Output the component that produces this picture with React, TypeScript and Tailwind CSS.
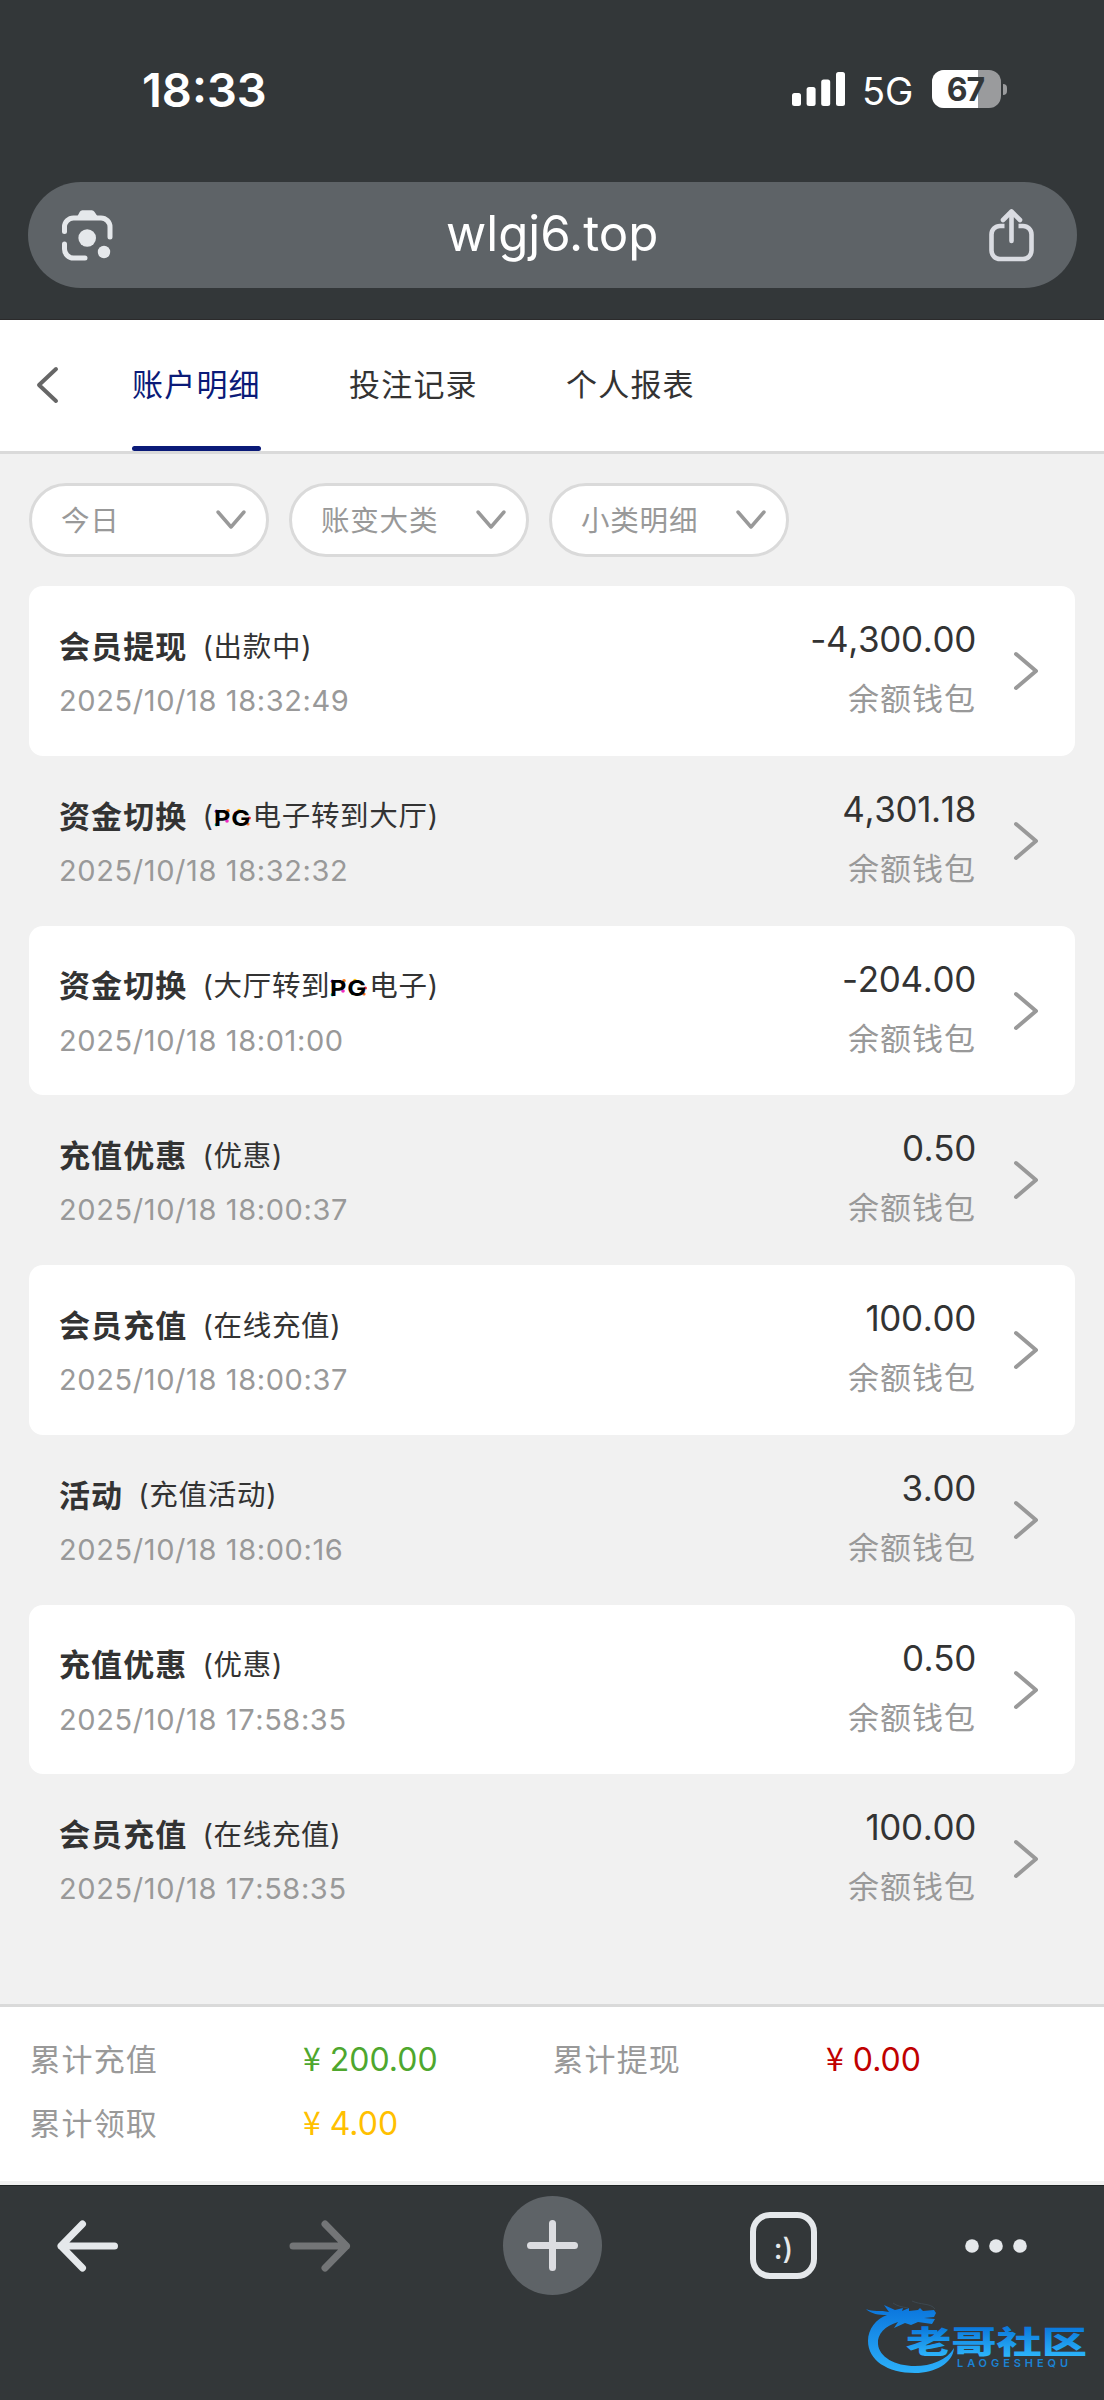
import type { ReactNode } from "react";

type RecordItem = {
  title: string;
  note: ReactNode;
  time: string;
  amount: string;
};

function PgMark() {
  return (
    <svg width="38" height="28" viewBox="0 0 38 28" className="mr-px inline-block overflow-visible align-[-6px]">
      <circle cx="2.4" cy="7.2" r="1.8" fill="#7a2bff" />
      <circle cx="14" cy="6.8" r="1.8" fill="#ff7a1a" />
      <circle cx="2.4" cy="20.8" r="1.8" fill="#10c8f0" />
      <circle cx="13" cy="17" r="1.8" fill="#f02bc0" />
      <circle cx="25" cy="6.6" r="1.8" fill="#ffc81a" />
      <circle cx="21.4" cy="9" r="1.6" fill="#f02b9a" />
      <circle cx="35.4" cy="14" r="1.6" fill="#ff2b3a" />
      <circle cx="22.4" cy="19.4" r="1.6" fill="#10a8f0" />
      <circle cx="34" cy="20" r="1.6" fill="#ff6a1a" />
      <text x="0" y="21.5" textLength="37" lengthAdjust="spacingAndGlyphs" className="font-['Inter',sans-serif] text-[22px] font-bold" fill="#000">
        PG
      </text>
    </svg>
  );
}

const tabs = ["账户明细", "投注记录", "个人报表"];
const filters = ["今日", "账变大类", "小类明细"];

const records: RecordItem[] = [
  { title: "会员提现", note: "出款中", time: "2025/10/18 18:32:49", amount: "-4,300.00" },
  { title: "资金切换", note: <><PgMark />电子转到大厅</>, time: "2025/10/18 18:32:32", amount: "4,301.18" },
  { title: "资金切换", note: <>大厅转到<PgMark />电子</>, time: "2025/10/18 18:01:00", amount: "-204.00" },
  { title: "充值优惠", note: "优惠", time: "2025/10/18 18:00:37", amount: "0.50" },
  { title: "会员充值", note: "在线充值", time: "2025/10/18 18:00:37", amount: "100.00" },
  { title: "活动", note: "充值活动", time: "2025/10/18 18:00:16", amount: "3.00" },
  { title: "充值优惠", note: "优惠", time: "2025/10/18 17:58:35", amount: "0.50" },
  { title: "会员充值", note: "在线充值", time: "2025/10/18 17:58:35", amount: "100.00" },
];

const totals = [
  { label: "累计充值", value: "200.00", color: "text-[#4ea72e]" },
  { label: "累计提现", value: "0.00", color: "text-[#c00000]" },
  { label: "累计领取", value: "4.00", color: "text-[#ffc000]" },
];

function StatusBar() {
  return (
    <div className="flex h-[182px] items-start justify-between pl-[142px] pr-[97px] pt-[60px] text-white">
      <span className="pt-px text-[47px] font-semibold leading-[58px]">18:33</span>
      <div className="flex h-[58px] items-center">
        <svg width="54" height="36" viewBox="0 0 54 36" fill="#fff">
          <rect x="0" y="22" width="9" height="13" rx="2.5" />
          <rect x="14.6" y="16" width="9" height="19" rx="2.5" />
          <rect x="29.2" y="8.4" width="9" height="26.6" rx="2.5" />
          <rect x="44" y="1" width="9" height="34" rx="2.5" />
        </svg>
        <span className="ml-[16px] w-[52px] pt-[3px] text-[38px] leading-[58px]">5G</span>
        <div className="relative ml-[18px] h-[38px] w-[69px] overflow-hidden rounded-[12px] bg-[#9a9b9d]">
          <div className="h-full w-[46px] bg-white" />
          <span className="absolute inset-0 pr-[2px] text-center text-[32px] font-bold leading-[39px] tracking-[-1px] text-[#333739]">67</span>
        </div>
        <div className="ml-[2px] h-[11px] w-[4px] rounded-r-full bg-[#9a9b9d]" />
      </div>
    </div>
  );
}

function AddressBar() {
  return (
    <div className="mx-[27.5px] flex h-[106px] items-center justify-between rounded-full bg-[#5e6367] pl-[34.5px] pr-[42px]">
      <svg width="51" height="52" viewBox="0 0 51 52" fill="none" stroke="#e5e8eb" strokeWidth="5" strokeLinecap="round">
        <path d="M2.5 22.5V18a9 9 0 0 1 9-9h27.5a9 9 0 0 1 9 9v10" />
        <path d="M2.5 35v5a9 9 0 0 0 9 9H23" />
        <path d="M15 8l2.8-5.2a3 3 0 0 1 2.6-1.6h9.4a3 3 0 0 1 2.6 1.6L36 8z" fill="#e5e8eb" stroke="none" />
        <circle cx="25.2" cy="29" r="8.8" fill="#e5e8eb" stroke="none" />
        <circle cx="42" cy="43" r="6.2" fill="#e5e8eb" stroke="none" />
      </svg>
      <span className="pb-[4px] pl-[2px] text-[49.2px] leading-[60px] text-white">wlgj6.top</span>
      <svg width="45" height="54" viewBox="0 0 45 54" fill="none" stroke="#dadce2" strokeWidth="4.6" strokeLinecap="round" strokeLinejoin="round">
        <path d="M15.5 18H11a8.5 8.5 0 0 0-8.5 8.5v16A8.5 8.5 0 0 0 11 51h23a8.5 8.5 0 0 0 8.5-8.5v-16A8.5 8.5 0 0 0 34 18h-4.5" strokeLinecap="butt" />
        <path d="M22.5 33V3.5M14 12l8.5-8.5L31 12" />
      </svg>
    </div>
  );
}

function TabNav() {
  return (
    <nav className="flex h-[134px] items-stretch border-b-[3px] border-[#dadada] bg-white">
      <div className="flex w-[132px] items-center pl-[34.5px] pb-[1px]">
        <svg width="24" height="40" viewBox="0 0 24 40" fill="none" stroke="#666" strokeWidth="4" strokeLinecap="round" strokeLinejoin="round">
          <path d="M21 4L4 20l17 16" />
        </svg>
      </div>
      <div className="flex gap-[88px]">
        {tabs.map((tab, i) => (
          <div
            key={tab}
            className={
              i === 0
                ? "flex w-[129px] flex-col justify-between text-[#0a1a78]"
                : "flex w-[129px] flex-col justify-between text-[#333]"
            }
          >
            <span className="whitespace-nowrap pt-[42px] text-[31px] leading-[46px] tracking-[1.2px]">{tab}</span>
            {i === 0 && <div className="h-[5px] rounded-full bg-[#0a1a78]" />}
          </div>
        ))}
      </div>
    </nav>
  );
}

function Filters() {
  return (
    <div className="flex gap-[20px] px-[29px] pt-[29px]">
      {filters.map((name) => (
        <div
          key={name}
          className="flex h-[74px] w-[240px] items-center justify-between rounded-full border-[3px] border-[#dadada] bg-white pl-[29px] pr-[19px] text-[28.5px] leading-[40px] text-[#999]"
        >
          <span className="pt-[2px] tracking-[0.8px]">{name}</span>
          <svg width="32" height="22" viewBox="0 0 32 22" fill="none" stroke="#999" strokeWidth="3.5" strokeLinecap="round" strokeLinejoin="round">
            <path d="M3 3l13 15L29 3" />
          </svg>
        </div>
      ))}
    </div>
  );
}

function RecordRow({ item, filled }: { item: RecordItem; filled: boolean }) {
  return (
    <li
      className={
        filled
          ? "flex h-[169.75px] rounded-[14px] bg-white pl-[30px] pr-[35px]"
          : "flex h-[169.75px] pl-[30px] pr-[35px]"
      }
    >
      <div className="flex-1 pt-[38px]">
        <div className="flex h-[46px] items-center whitespace-nowrap text-[#333]">
          <span className="text-[31px] font-bold tracking-[1.1px]">{item.title}</span>
          <span className="ml-[15px] text-[28.5px] tracking-[0.7px]">({item.note})</span>
        </div>
        <p className="mt-[11px] text-[29px] leading-[40px] tracking-[0.6px] text-[#999] [font-kerning:none]">{item.time}</p>
      </div>
      <div className="flex flex-col items-end pt-[31px]">
        <span className="text-[35px] leading-[44px] tracking-[-0.35px] text-[#333] [font-kerning:none]">{item.amount}</span>
        <span className="mt-[15px] text-[31px] leading-[46px] tracking-[1px] text-[#999]">余额钱包</span>
      </div>
      <svg width="28" height="42" viewBox="0 0 28 42" className="ml-[36px] mt-[64px]" fill="none" stroke="#999" strokeWidth="4" strokeLinecap="round" strokeLinejoin="round">
        <path d="M4 4l20 17L4 38" />
      </svg>
    </li>
  );
}

function Totals() {
  return (
    <div className="grid h-[177px] grid-cols-[523px_523px] content-start gap-y-[18px] border-t-[3px] border-[#dadada] bg-white pl-[29.5px] pt-[30px]">
      {totals.map((t) => (
        <div key={t.label} className="flex h-[46px] items-center">
          <span className="w-[273.5px] text-[31px] tracking-[1.1px] text-[#999]">{t.label}</span>
          <span className={`pb-[3px] text-[32px] ${t.color}`}>
            <span className="mr-[9px] font-['Noto_Sans_CJK_SC',sans-serif]">¥</span>
            {t.value}
          </span>
        </div>
      ))}
    </div>
  );
}

function Watermark() {
  return (
    <svg width="230" height="90" viewBox="0 0 230 90" className="absolute right-[9px] bottom-[10px]">
      <defs>
        <linearGradient id="wm" x1="0" y1="0" x2="0" y2="1">
          <stop offset="0" stopColor="#0a74dc" />
          <stop offset="1" stopColor="#2cb0fa" />
        </linearGradient>
        <linearGradient id="wmText" gradientUnits="userSpaceOnUse" x1="0" y1="27" x2="0" y2="56">
          <stop offset="0" stopColor="#0a78dc" />
          <stop offset="1" stopColor="#2cb4fa" />
        </linearGradient>
      </defs>
      <path
        fill="url(#wm)"
        d="M1 9C8 12 15 10 24 12L19 5L30 10L38 8L37 11L44 8L44 11L53 10L55 8L58 11L69 10L71 13L69 17L59 18L70 19L67 24L53 22L46 25L40 23L29 28L33 22C20 26 12 34 13 44C14 57 30 66 50 66C66 66 82 60 89 48C88 63 70 73 50 73C22 73 3 60 3 41C3 29 11 19 22 15C14 15 6 14 1 9Z"
      />
      <path d="M28 3c4 3 9 4 15 5M47 1c8 4 19 2 23 8" fill="none" stroke="#3c4850" strokeWidth="1" />
      <text x="41" y="53" textLength="181" lengthAdjust="spacingAndGlyphs" className="font-['Noto_Sans_CJK_SC',sans-serif] text-[31px] font-black" fill="url(#wmText)">
        老哥社区
      </text>
      <text x="92" y="67.3" textLength="111" className="text-[11px] font-semibold" fill="#1b83d4">
        LAOGESHEQU
      </text>
    </svg>
  );
}

function BottomBar() {
  return (
    <footer className="relative flex h-[215px] items-start border-t border-[#1f2424] bg-[#333739]">
      <div className="flex h-[120px] w-full items-center">
        <svg width="62" height="54" viewBox="0 0 62 54" className="ml-[56.5px]" fill="none" stroke="#e5e8eb" strokeWidth="7" strokeLinecap="round" strokeLinejoin="round">
          <path d="M57.5 27H4M25.5 5L4 27l21.5 22" />
        </svg>
        <svg width="62" height="54" viewBox="0 0 62 54" className="ml-[170.5px]" fill="none" stroke="#737577" strokeWidth="7" strokeLinecap="round" strokeLinejoin="round">
          <path d="M4 27h53.5M36 5l21.5 22L36 49" />
        </svg>
        <div className="mb-[2px] ml-[151.5px] flex h-[99px] w-[99px] items-center justify-center rounded-full bg-[#5e6367]">
          <svg width="51" height="51" viewBox="0 0 51 51" fill="none" stroke="#dcdde1" strokeWidth="7" strokeLinecap="round">
            <path d="M25.5 3.5v44M3.5 25.5h44" />
          </svg>
        </div>
        <div className="mb-px ml-[148.5px] flex h-[67px] w-[67px] items-center justify-center rounded-[20px] border-[6px] border-[#e5e8eb] pt-[6px] text-[29px] font-medium leading-none text-[#e5e8eb] [font-feature-settings:'calt'_0]">
          :)
        </div>
        <svg width="62" height="14" viewBox="0 0 62 14" className="ml-[148px]" fill="#e5e8eb">
          <circle cx="7" cy="7" r="6.8" />
          <circle cx="31" cy="7" r="6.8" />
          <circle cx="55" cy="7" r="6.8" />
        </svg>
      </div>
      <Watermark />
    </footer>
  );
}

export default function App() {
  return (
    <div className="flex h-[2400px] w-[1104px] flex-col overflow-hidden bg-[#f1f1f1] font-['Inter','Noto_Sans_CJK_SC',sans-serif]">
      <header className="h-[320px] shrink-0 border-b border-[#2b2a2b] bg-[#333739]">
        <StatusBar />
        <AddressBar />
      </header>
      <TabNav />
      <Filters />
      <ul className="mt-[29px] flex-1 px-[29px]">
        {records.map((item, i) => (
          <RecordRow key={i} item={item} filled={i % 2 === 0} />
        ))}
      </ul>
      <Totals />
      <div className="h-[4px] shrink-0" />
      <BottomBar />
    </div>
  );
}
